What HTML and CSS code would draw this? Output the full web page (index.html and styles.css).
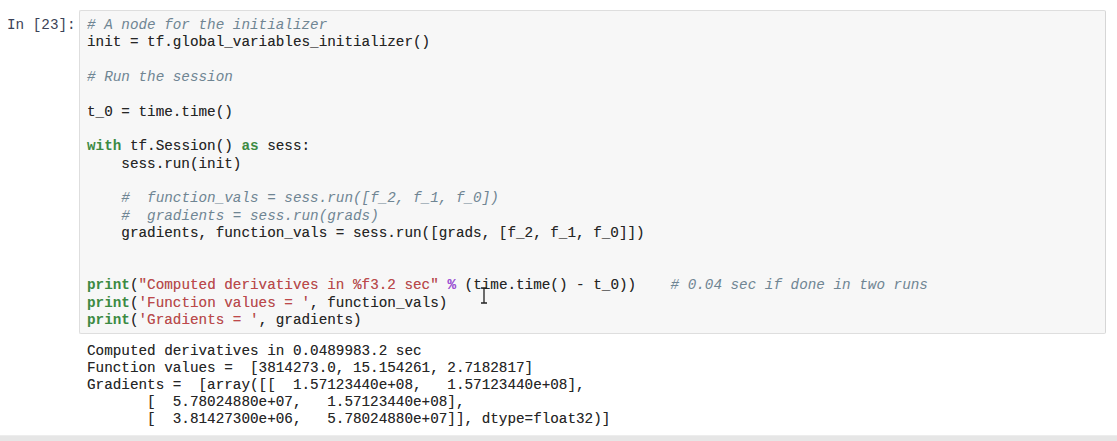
FILE: index.html
```html
<!DOCTYPE html>
<html>
<head>
<meta charset="utf-8">
<link rel="stylesheet" href="styles.css">
</head>
<body>
<div class="page">
  <div class="cell">
    <div class="prompt">In [23]:</div>
    <div class="main">
      <div class="input"><pre class="code"><span class="c"># A node for the initializer</span>
init = tf.global_variables_initializer()

<span class="c"># Run the session</span>

t_0 = time.time()

<span class="k">with</span> tf.Session() <span class="k">as</span> sess:
    sess.run(init)

    <span class="c">#  function_vals = sess.run([f_2, f_1, f_0])</span>
    <span class="c">#  gradients = sess.run(grads)</span>
    gradients, function_vals = sess.run([grads, [f_2, f_1, f_0]])


<span class="k">print</span>(<span class="s">"Computed derivatives in %f3.2 sec"</span> <span class="o">%</span> (time.time() - t_0))    <span class="c"># 0.04 sec if done in two runs</span>
<span class="k">print</span>(<span class="s">'Function values = '</span>, function_vals)
<span class="k">print</span>(<span class="s">'Gradients = '</span>, gradients)</pre><svg class="ibeam" width="10" height="17" viewBox="0 0 10 17"><path d="M2 1h6M5 1v15M2 16h6" stroke="#222" stroke-width="1.3" fill="none"/></svg></div>
      <pre class="output">Computed derivatives in 0.0489983.2 sec
Function values =  [3814273.0, 15.154261, 2.7182817]
Gradients =  [array([[  1.57123440e+08,   1.57123440e+08],
       [  5.78024880e+07,   1.57123440e+08],
       [  3.81427300e+06,   5.78024880e+07]], dtype=float32)]</pre>
    </div>
  </div>
  <div class="bottombar"></div>
</div>
</body>
</html>
```
FILE: styles.css
```css
html, body {
  margin: 0;
  padding: 0;
  background: #ffffff;
}
.page {
  width: 1117px;
  height: 441px;
  position: relative;
  overflow: hidden;
  display: flex;
  flex-direction: column;
}
.cell {
  display: flex;
  padding-top: 10px;
  flex: 1;
}
.prompt {
  width: 79px;
  box-sizing: border-box;
  padding-left: 7px;
  padding-top: 7px;
  font-family: "Liberation Mono", monospace;
  font-size: 14.3px;
  line-height: 17.35px;
  color: #3b4257;
  white-space: pre;
}
.main {
  width: 1027px;
  display: flex;
  flex-direction: column;
}
.input {
  position: relative;
  background: #f7f7f7;
  border: 1px solid #dedede;
  border-right-color: #d6d6d6;
  border-radius: 2px;
  padding: 6px 7px 5px 7px;
  height: 324px;
  box-sizing: border-box;
}
.code, .output {
  margin: 0;
  font-family: "Liberation Mono", monospace;
  font-size: 14.3px;
  line-height: 17.35px;
  color: #262626;
  text-shadow: 0 0 0.6px rgba(0,0,0,0.35);
}
.c {
  color: #6f8593;
  font-style: italic;
  text-shadow: none;
}
.k {
  color: #3c8a43;
  font-weight: bold;
  text-shadow: none;
}
.s {
  color: #c0484a;
}
.o {
  color: #a24ee0;
  font-weight: bold;
}
.output {
  padding: 9px 0 0 8px;
  line-height: 17.1px;
}
.ibeam {
  position: absolute;
  left: 399px;
  top: 276px;
}
.bottombar {
  height: 5px;
  background: #e6e6e6;
  border-top: 1px solid #ededed;
}
```
